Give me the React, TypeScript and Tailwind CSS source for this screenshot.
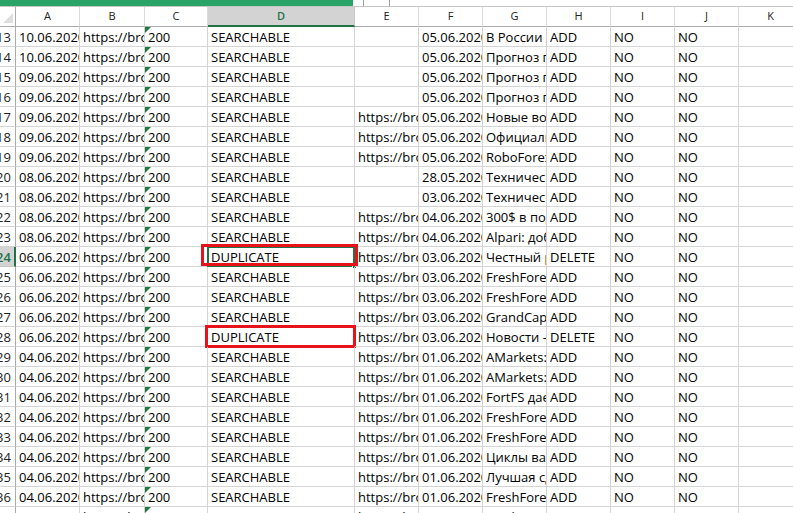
import React from "react";

type Row = [number, string, string, string, string, string, string, string, string, string, string];

const rows: Row[] = [
  [13, "10.06.2020", "https://brokers.ru", "200", "SEARCHABLE", "", "05.06.2020", "В России и", "ADD", "NO", "NO"],
  [14, "10.06.2020", "https://brokers.ru", "200", "SEARCHABLE", "", "05.06.2020", "Прогноз по", "ADD", "NO", "NO"],
  [15, "09.06.2020", "https://brokers.ru", "200", "SEARCHABLE", "", "05.06.2020", "Прогноз по", "ADD", "NO", "NO"],
  [16, "09.06.2020", "https://brokers.ru", "200", "SEARCHABLE", "", "05.06.2020", "Прогноз по", "ADD", "NO", "NO"],
  [17, "09.06.2020", "https://brokers.ru", "200", "SEARCHABLE", "https://brokers.ru", "05.06.2020", "Новые возможности", "ADD", "NO", "NO"],
  [18, "09.06.2020", "https://brokers.ru", "200", "SEARCHABLE", "https://brokers.ru", "05.06.2020", "Официальный", "ADD", "NO", "NO"],
  [19, "09.06.2020", "https://brokers.ru", "200", "SEARCHABLE", "https://brokers.ru", "05.06.2020", "RoboForex", "ADD", "NO", "NO"],
  [20, "08.06.2020", "https://brokers.ru", "200", "SEARCHABLE", "", "28.05.2020", "Технический", "ADD", "NO", "NO"],
  [21, "08.06.2020", "https://brokers.ru", "200", "SEARCHABLE", "", "03.06.2020", "Технический", "ADD", "NO", "NO"],
  [22, "08.06.2020", "https://brokers.ru", "200", "SEARCHABLE", "https://brokers.ru", "04.06.2020", "300$ в подарок", "ADD", "NO", "NO"],
  [23, "08.06.2020", "https://brokers.ru", "200", "SEARCHABLE", "https://brokers.ru", "04.06.2020", "Alpari: добро", "ADD", "NO", "NO"],
  [24, "06.06.2020", "https://brokers.ru", "200", "DUPLICATE", "https://brokers.ru", "03.06.2020", "Честный рейтинг", "DELETE", "NO", "NO"],
  [25, "06.06.2020", "https://brokers.ru", "200", "SEARCHABLE", "https://brokers.ru", "03.06.2020", "FreshForex", "ADD", "NO", "NO"],
  [26, "06.06.2020", "https://brokers.ru", "200", "SEARCHABLE", "https://brokers.ru", "03.06.2020", "FreshForex", "ADD", "NO", "NO"],
  [27, "06.06.2020", "https://brokers.ru", "200", "SEARCHABLE", "https://brokers.ru", "03.06.2020", "GrandCapital", "ADD", "NO", "NO"],
  [28, "06.06.2020", "https://brokers.ru", "200", "DUPLICATE", "https://brokers.ru", "03.06.2020", "Новости - рынок", "DELETE", "NO", "NO"],
  [29, "04.06.2020", "https://brokers.ru", "200", "SEARCHABLE", "https://brokers.ru", "01.06.2020", "AMarkets: итоги", "ADD", "NO", "NO"],
  [30, "04.06.2020", "https://brokers.ru", "200", "SEARCHABLE", "https://brokers.ru", "01.06.2020", "AMarkets: итоги", "ADD", "NO", "NO"],
  [31, "04.06.2020", "https://brokers.ru", "200", "SEARCHABLE", "https://brokers.ru", "01.06.2020", "FortFS дает", "ADD", "NO", "NO"],
  [32, "04.06.2020", "https://brokers.ru", "200", "SEARCHABLE", "https://brokers.ru", "01.06.2020", "FreshForex", "ADD", "NO", "NO"],
  [33, "04.06.2020", "https://brokers.ru", "200", "SEARCHABLE", "https://brokers.ru", "01.06.2020", "FreshForex", "ADD", "NO", "NO"],
  [34, "04.06.2020", "https://brokers.ru", "200", "SEARCHABLE", "https://brokers.ru", "01.06.2020", "Циклы валют", "ADD", "NO", "NO"],
  [35, "04.06.2020", "https://brokers.ru", "200", "SEARCHABLE", "https://brokers.ru", "01.06.2020", "Лучшая сделка", "ADD", "NO", "NO"],
  [36, "04.06.2020", "https://brokers.ru", "200", "SEARCHABLE", "https://brokers.ru", "01.06.2020", "FreshForex", "ADD", "NO", "NO"],
  [37, "04.06.2020", "https://brokers.ru", "200", "SEARCHABLE", "https://brokers.ru", "01.06.2020", "FreshForex", "ADD", "NO", "NO"],
];

const cols = ["A", "B", "C", "D", "E", "F", "G", "H", "I", "J", "K"];

const grid =
  "grid grid-cols-[16px_64px_65px_63px_147px_64px_64px_64px_64px_64px_64px_64px]";

function Cell({ text, children }: { text: string; children?: React.ReactNode }) {
  return (
    <div className="relative h-[20px] border-r border-b border-[#d4d4d4] pl-[3px] overflow-visible">
      <div className="overflow-hidden whitespace-nowrap pt-[1px] leading-[19px] h-[19px] text-[13px] text-[#000]">
        {text}
      </div>
      {children}
    </div>
  );
}

export default function App() {
  return (
    <div
      className="w-[793px] h-[513px] overflow-hidden bg-white"
      style={{ fontFamily: '"Open Sans", "Noto Sans", sans-serif' }}
    >
      {/* top strip */}
      <div className="flex h-[7px] border-b border-[#c6c6c6]">
        <div className="w-[353px] bg-[#2aa366]" />
        <div className="w-[10px]" />
        <div className="w-[27px] border-l border-r border-[#9e9e9e]" />
        <div className="flex-1" />
      </div>

      {/* column header */}
      <div className={grid + " h-[20px]"}>
        <div className="relative border-r border-b border-[#ababab] bg-white">
          <div className="absolute right-[2px] bottom-[3px] w-0 h-0 border-l-[10px] border-l-transparent border-b-[10px] border-b-[#dfdfdf]" />
        </div>
        {cols.map((c) =>
          c === "D" ? (
            <div
              key={c}
              className="flex items-center justify-center bg-[#d3d3d3] border-r border-[#c6c6c6] border-b-2 border-b-[#217346] text-[11px] font-semibold text-[#217346]"
            >
              {c}
            </div>
          ) : (
            <div
              key={c}
              className="flex items-center justify-center border-r border-[#dadada] border-b border-b-[#ababab] text-[11px] text-[#222]"
            >
              {c}
            </div>
          )
        )}
      </div>

      {/* rows */}
      {rows.map((r) => {
        const sel = r[0] === 24;
        return (
          <div key={r[0]} className={grid}>
            <div
              className={
                "h-[20px] overflow-hidden border-b " +
                (sel
                  ? "bg-[#d3d3d3] border-r-2 border-r-[#217346] border-b-[#c6c6c6]"
                  : "border-r border-r-[#ababab] border-b-[#d4d4d4]")
              }
            >
              <div
                className={
                  "ml-[-9px] w-[25px] pt-[1px] text-center leading-[19px] text-[13px] " +
                  (sel ? "text-[#217346] font-semibold" : "text-[#222]")
                }
              >
                {r[0]}
              </div>
            </div>
            <Cell text={r[1]} />
            <Cell text={r[2]} />
            <Cell text={r[3]}>
              <div className="absolute left-0 top-0 w-0 h-0 border-t-[6px] border-t-[#1e7a3c] border-r-[6px] border-r-transparent" />
            </Cell>
            <Cell text={r[4]}>
              {sel && (
                <>
                  <div className="absolute left-[-1px] top-[-1px] w-[148px] h-[21px] border-2 border-[#217346]" />
                  <div className="absolute right-[-3px] bottom-[-3px] w-[5px] h-[5px] bg-[#217346] border border-white" />
                  <div className="absolute left-[-7px] top-[-3px] w-[157px] h-[22px] border-[3px] border-[#e8121b]" />
                </>
              )}
              {r[0] === 28 && (
                <div className="absolute left-[-3px] top-[-2px] w-[151px] h-[23px] border-[3px] border-[#e8121b]" />
              )}
            </Cell>
            <Cell text={r[5]} />
            <Cell text={r[6]} />
            <Cell text={r[7]} />
            <Cell text={r[8]} />
            <Cell text={r[9]} />
            <Cell text={r[10]} />
            <Cell text="" />
          </div>
        );
      })}
    </div>
  );
}
